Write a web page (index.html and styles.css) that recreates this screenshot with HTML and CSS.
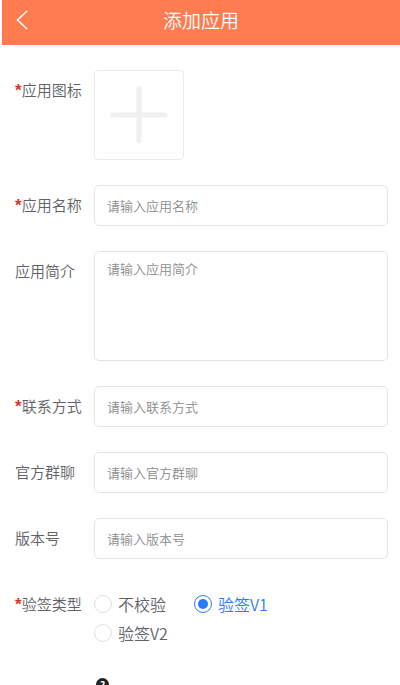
FILE: index.html
```
<!DOCTYPE html>
<html lang="zh-CN">
<head>
<meta charset="UTF-8">
<meta name="viewport" content="width=device-width, initial-scale=1">
<title>添加应用</title>
<link rel="stylesheet" href="styles.css">
</head>
<body>
<div class="page">
	<header class="navbar">
		<button type="button" class="back" aria-label="返回">
			<svg width="12" height="20" viewBox="0 0 12 20"><path d="M11 1L1.500 10L11 19"/></svg>
		</button>
		<h1 class="title">添加应用</h1>
	</header>

	<form class="form">
		<div class="row">
			<label class="label required" for="icon">应用图标</label>
			<button type="button" class="upload" id="icon">
				<svg width="58" height="58" viewBox="0 0 58 58"><path d="M29 3V55M3 29H55"/></svg>
			</button>
		</div>
		<div class="row">
			<label class="label required" for="name">应用名称</label>
			<input type="text" class="field" id="name" placeholder="请输入应用名称">
		</div>
		<div class="row">
			<label class="label" for="intro">应用简介</label>
			<textarea class="field area" id="intro" placeholder="请输入应用简介"></textarea>
		</div>
		<div class="row">
			<label class="label required" for="contact">联系方式</label>
			<input type="text" class="field" id="contact" placeholder="请输入联系方式">
		</div>
		<div class="row">
			<label class="label" for="group">官方群聊</label>
			<input type="text" class="field" id="group" placeholder="请输入官方群聊">
		</div>
		<div class="row">
			<label class="label" for="version">版本号</label>
			<input type="text" class="field" id="version" placeholder="请输入版本号">
		</div>
		<div class="row" role="radiogroup" aria-labelledby="signLabel">
			<span class="label required" id="signLabel">验签类型</span>
			<div class="radios">
				<label class="radio"><input type="radio" name="sign" value="0"><span>不校验</span></label>
				<label class="radio"><input type="radio" name="sign" value="1" checked><span>验签V1</span></label>
				<label class="radio"><input type="radio" name="sign" value="2"><span>验签V2</span></label>
			</div>
		</div>
		<div class="row">
			<span class="label"></span>
			<button type="button" class="help">?</button>
		</div>
	</form>
</div>
</body>
</html>
```

FILE: styles.css
```
*{
	box-sizing:border-box;
}
body{
	margin:0;
	color:#606266;
	background:#FFF;
	font-family:"Noto Sans CJK SC","Noto Sans",sans-serif;
	font-size:15px;
	font-weight:350;
}
button,input,textarea{
	margin:0;
	font-family:inherit;
	font-weight:inherit;
}
.page{
	height:100vh;
	padding-left:2px;
	overflow:hidden;
}
.navbar{
	display:grid;
	grid-template-columns:40px 1fr 40px;
	align-items:center;
	height:45px;
	padding-bottom:5px;
	color:#FFF;
	background:#FF7B50;
}
.back{
	display:flex;
	justify-content:center;
	padding:0;
	border:0;
	background:none;
}
.back svg{
	fill:none;
	stroke:#FFF;
	stroke-width:1.6;
}
.title{
	margin:0;
	font-size:19px;
	font-weight:inherit;
	line-height:26px;
	text-align:center;
}
.form{
	display:flex;
	flex-direction:column;
	gap:25px;
	padding:25px 12px 0 13px;
}
.row{
	display:flex;
	align-items:flex-start;
}
.label{
	flex:none;
	width:79px;
	line-height:40px;
}
.required::before{
	content:"*";
	color:#E0302D;
	font-family:"Liberation Sans",sans-serif;
	font-size:17px;
	font-weight:700;
	line-height:1;
}
.upload{
	display:flex;
	align-items:center;
	justify-content:center;
	width:90px;
	height:90px;
	padding:0;
	border:1px solid #EBEBEB;
	border-radius:4px;
	background:#FFF;
}
.upload svg{
	fill:none;
	stroke:#F0F0F0;
	stroke-width:5;
	stroke-linecap:round;
}
.field{
	flex:1;
	min-width:0;
	height:41px;
	padding:0 12px;
	border:1px solid #E4E4E4;
	border-radius:5px;
	color:#606266;
	background:#FFF;
	font-size:13px;
	outline:0;
}
.field::placeholder{
	color:#8C8C8C;
	opacity:1;
}
.area{
	height:110px;
	padding:7px 12px;
	line-height:20px;
	resize:none;
}
.radios{
	display:grid;
	grid-template-columns:repeat(2,100px);
	flex:1;
	padding-top:5px;
}
.radio{
	display:flex;
	align-items:center;
	gap:6px;
	height:29px;
	font-size:16px;
}
.radio input{
	appearance:none;
	display:grid;
	place-items:center;
	width:18px;
	height:18px;
	margin:0;
	border:1px solid #DCDFE6;
	border-radius:50%;
}
.radio input:checked{
	border-color:#2979FF;
}
.radio input:checked::before{
	content:"";
	width:10px;
	height:10px;
	border-radius:50%;
	background:#2979FF;
}
.radio input:checked + span{
	color:#2979FF;
}
.help{
	width:13px;
	height:13px;
	margin:6px 2px;
	padding:0;
	border:0;
	border-radius:50%;
	color:#FFF;
	background:#222;
	font-size:10px;
	font-weight:700;
	line-height:13px;
}
```
